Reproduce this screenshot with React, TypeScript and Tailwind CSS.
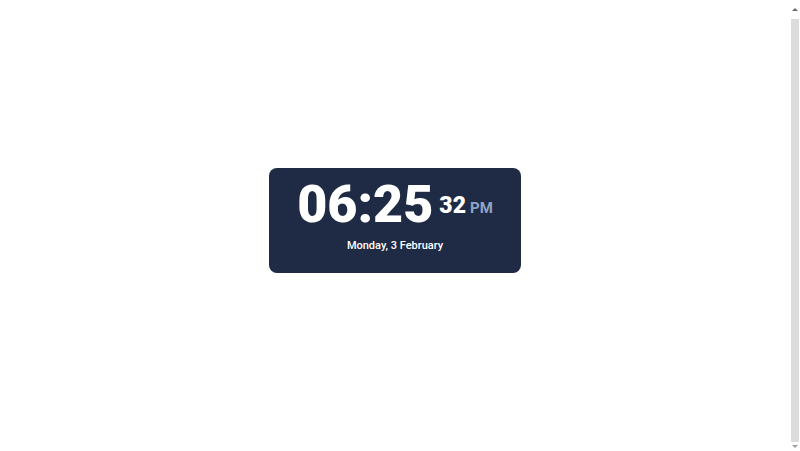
import React from "react"

export default function App() {
  return (
    <div className="flex h-[451px] w-full bg-white" style={{ fontFamily: "Roboto, 'Liberation Sans', sans-serif" }}>
      <main className="flex flex-1 items-center justify-center pb-[10px]">
        <div className="flex h-[105px] w-[252px] flex-col items-center rounded-lg bg-[#1f2a44] pt-[11px]">
          {/* Time */}
          <div className="flex h-[52px] items-center">
            <span className="text-[52px] font-black leading-[52px] text-white">06:25</span>
            <div className="ml-[6px] flex items-baseline">
              <span className="text-[23px] font-black leading-none text-white">32</span>
              <span className="ml-[4px] text-[15px] font-bold leading-none text-[#8fa3c6]">PM</span>
            </div>
          </div>
          {/* Date */}
          <div className="mt-[7px] text-[11px] font-medium leading-[16px] text-white">Monday, 3 February</div>
        </div>
      </main>

      {/* Scrollbar */}
      <div className="flex w-[10px] flex-col items-center">
        <div className="flex h-[19px] items-center justify-center">
          <div className="h-0 w-0 border-x-[3px] border-b-[3px] border-x-transparent border-b-[#6b6b6b]" />
        </div>
        <div className="w-[8px] flex-1 bg-[#dcdcdc]" />
        <div className="flex h-[9px] items-center justify-center">
          <div className="h-0 w-0 border-x-[3px] border-t-[3px] border-x-transparent border-t-[#a0a0a0]" />
        </div>
      </div>
    </div>
  )
}
